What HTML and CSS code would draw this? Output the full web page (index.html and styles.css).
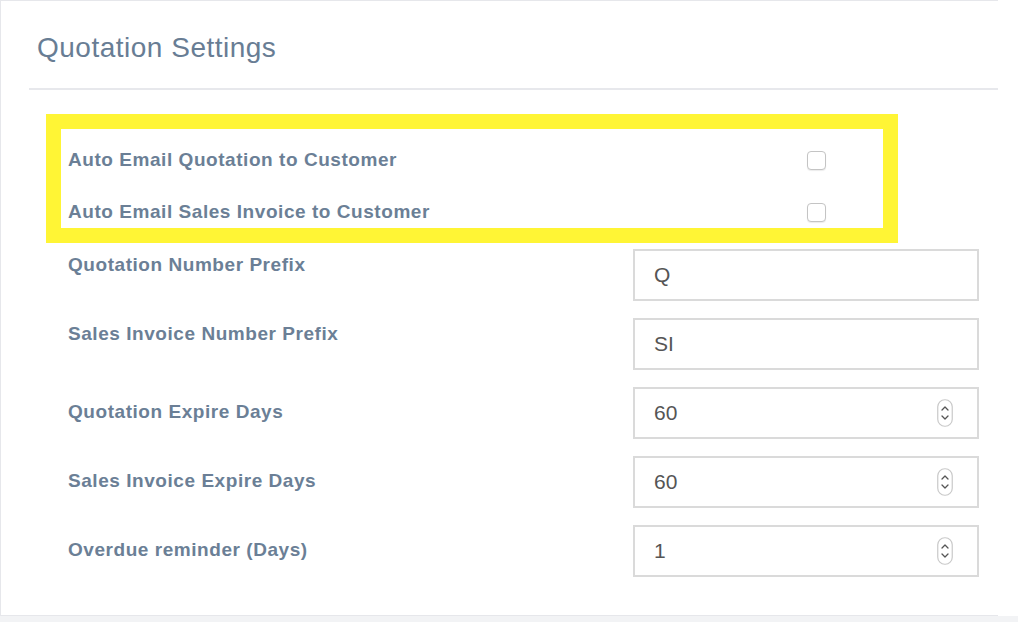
FILE: index.html
```html
<!DOCTYPE html>
<html>
<head>
<meta charset="utf-8">
<link rel="stylesheet" href="styles.css">
</head>
<body>
<div class="page">
  <section class="card">
    <h1 class="title">Quotation Settings</h1>
    <div class="divider"></div>
    <div class="form">
      <div class="highlight">
        <div class="check-row">
          <span class="label">Auto Email Quotation to Customer</span>
          <span class="checkbox"></span>
        </div>
        <div class="check-row">
          <span class="label">Auto Email Sales Invoice to Customer</span>
          <span class="checkbox"></span>
        </div>
      </div>
      <div class="field field-top">
        <span class="label">Quotation Number Prefix</span>
        <div class="input"><span class="value">Q</span></div>
      </div>
      <div class="field field-top">
        <span class="label">Sales Invoice Number Prefix</span>
        <div class="input"><span class="value">SI</span></div>
      </div>
      <div class="field">
        <span class="label">Quotation Expire Days</span>
        <div class="input"><span class="value">60</span>
          <svg class="spin" width="16" height="28" viewBox="0 0 16 28"><rect x="0.75" y="0.75" width="14.5" height="26.5" rx="7" fill="#fff" stroke="#c9c9c9" stroke-width="1.2"/><path d="M5 11 L8 8 L11 11" fill="none" stroke="#555" stroke-width="1.3" stroke-linecap="round" stroke-linejoin="round"/><path d="M5 17 L8 20 L11 17" fill="none" stroke="#555" stroke-width="1.3" stroke-linecap="round" stroke-linejoin="round"/></svg>
        </div>
      </div>
      <div class="field">
        <span class="label">Sales Invoice Expire Days</span>
        <div class="input"><span class="value">60</span>
          <svg class="spin" width="16" height="28" viewBox="0 0 16 28"><rect x="0.75" y="0.75" width="14.5" height="26.5" rx="7" fill="#fff" stroke="#c9c9c9" stroke-width="1.2"/><path d="M5 11 L8 8 L11 11" fill="none" stroke="#555" stroke-width="1.3" stroke-linecap="round" stroke-linejoin="round"/><path d="M5 17 L8 20 L11 17" fill="none" stroke="#555" stroke-width="1.3" stroke-linecap="round" stroke-linejoin="round"/></svg>
        </div>
      </div>
      <div class="field">
        <span class="label">Overdue reminder (Days)</span>
        <div class="input"><span class="value">1</span>
          <svg class="spin" width="16" height="28" viewBox="0 0 16 28"><rect x="0.75" y="0.75" width="14.5" height="26.5" rx="7" fill="#fff" stroke="#c9c9c9" stroke-width="1.2"/><path d="M5 11 L8 8 L11 11" fill="none" stroke="#555" stroke-width="1.3" stroke-linecap="round" stroke-linejoin="round"/><path d="M5 17 L8 20 L11 17" fill="none" stroke="#555" stroke-width="1.3" stroke-linecap="round" stroke-linejoin="round"/></svg>
        </div>
      </div>
    </div>
  </section>
  <div class="bottom-strip"></div>
</div>
</body>
</html>
```

FILE: styles.css
```css
html, body {
  margin: 0;
  padding: 0;
  background: #ffffff;
  font-family: "Liberation Sans", Arial, sans-serif;
}

.page {
  width: 1024px;
  height: 622px;
  overflow: hidden;
}

.card {
  box-sizing: border-box;
  width: 998px;
  height: 616px;
  border: 1px solid #e6e7eb;
  border-right: none;
  background: #fff;
  display: flex;
  flex-direction: column;
}

.bottom-strip {
  width: 1018px;
  height: 6px;
  background: #f2f3f5;
}

.title {
  margin: 0;
  padding: 31px 0 0 36px;
  height: 55px;
  box-sizing: border-box;
  font-size: 28px;
  line-height: 32px;
  font-weight: normal;
  letter-spacing: 0.5px;
  color: #687d94;
}

.divider {
  margin: 32px 0 0 28px;
  height: 2px;
  background: #e7e8ec;
}

.form {
  padding: 24px 19px 0 45px;
  display: flex;
  flex-direction: column;
}

.highlight {
  width: 852px;
  box-sizing: border-box;
  border: 15px solid #fff535;
  padding: 18px 57px 3px 7px;
  display: flex;
  flex-direction: column;
  gap: 26px;
  margin-bottom: 6px;
}

.check-row {
  height: 26px;
  display: flex;
  align-items: center;
  justify-content: space-between;
}

.label {
  font-size: 19px;
  font-weight: bold;
  color: #6b7f96;
  line-height: 20px;
  letter-spacing: 0.55px;
}

.checkbox {
  box-sizing: border-box;
  width: 19px;
  height: 19px;
  border: 1.5px solid #c4c4c4;
  border-radius: 4px;
  box-shadow: 0 1px 1px rgba(0,0,0,0.08);
  background: #fff;
}

.field {
  display: grid;
  grid-template-columns: 1fr 346px;
  align-items: center;
  padding-left: 22px;
  margin-bottom: 17px;
}

.field .label {
  padding-bottom: 3px;
}

.field-top {
  align-items: start;
}

.field-top .label {
  padding-top: 6px;
  padding-bottom: 0;
}

.input {
  box-sizing: border-box;
  height: 52px;
  border: 2px solid #dadada;
  display: flex;
  align-items: center;
  justify-content: space-between;
  padding: 0 24px 0 19px;
  background: #fff;
}

.value {
  font-size: 21px;
  color: #555;
}

.spin {
  display: block;
}
```
